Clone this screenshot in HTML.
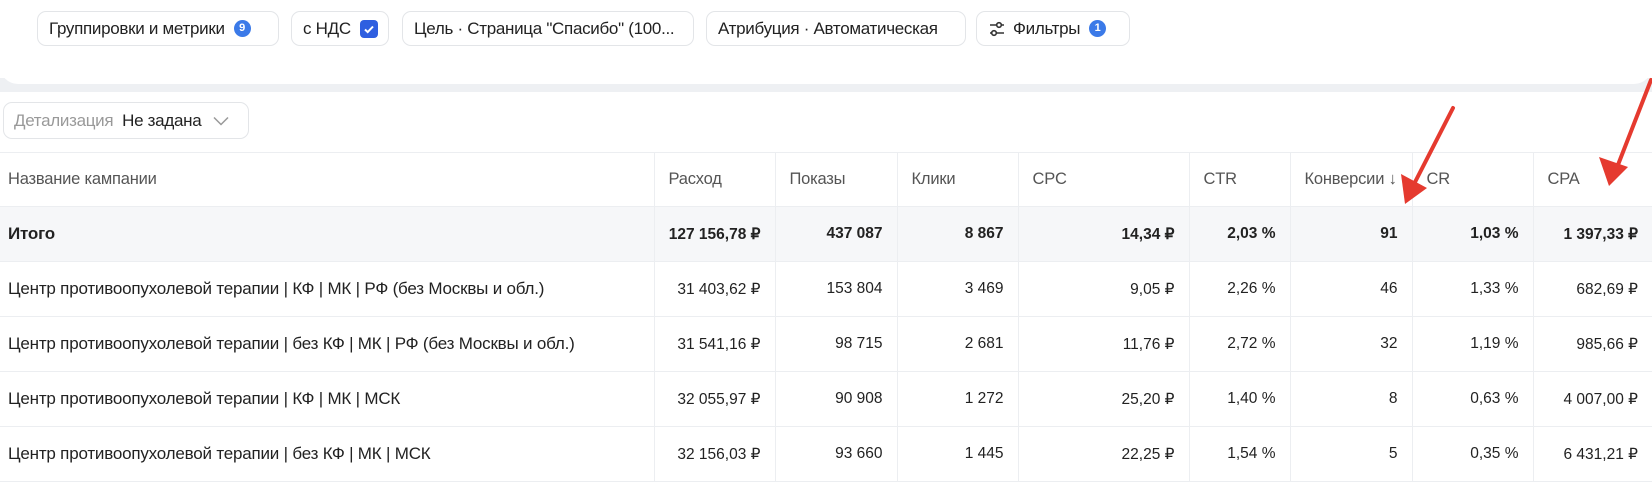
<!DOCTYPE html>
<html><head><meta charset="utf-8"><style>
*{box-sizing:border-box;margin:0;padding:0}
body{width:1652px;height:476px;overflow:hidden;background:#fff;font-family:"Liberation Sans","Noto Sans CJK SC",sans-serif;color:#222;position:relative;font-size:15.5px}
.top{position:absolute;left:0;top:0;width:1652px;height:84px;background:#fff;border-radius:0 0 18px 18px}
.band{position:absolute;left:0;top:78px;width:1652px;height:14px;background:#eef0f3}
.chip{position:absolute;top:11px;height:35px;border:1px solid #e3e5e8;border-radius:9px;display:flex;align-items:center;padding:0 11px;font-size:17px;letter-spacing:-0.3px;color:#222;white-space:nowrap;background:#fff;overflow:hidden}
.badge{display:inline-block;width:17px;height:17px;border-radius:50%;background:#3b7ae8;color:#fff;font-size:11px;font-weight:bold;text-align:center;line-height:17px;margin-left:9px;letter-spacing:0}
.cb{display:inline-block;width:18px;height:18px;border-radius:4px;background:#2f5fe0;margin-left:9px;position:relative}
.dd{position:absolute;left:3px;top:102px;width:246px;height:37px;border:1px solid #e3e5e8;border-radius:9px;display:flex;align-items:center;padding-left:10px;font-size:17px;letter-spacing:-0.3px}
table{position:absolute;left:0;top:152px;border-collapse:collapse;table-layout:fixed;width:1652px}
td{height:55px;border:1px solid #eceef1;padding:0 14px;text-align:right;white-space:nowrap;font-size:15.5px}
td:first-child{text-align:left;padding-left:8px;border-left:none;font-size:17px;letter-spacing:-0.2px}
td:last-child{border-right:none}
tr.h td{height:54px;text-align:left;color:#555;border-top:1px solid #eceef1;font-size:16.5px;letter-spacing:-0.2px}
tr.t td{background:#f6f7f9;font-weight:bold}
</style></head><body>
<div class="band"></div>
<div class="top"></div>
<div class="chip" style="left:37px;width:242px">Группировки и метрики<span class="badge">9</span></div>
<div class="chip" style="left:291px;width:98px">с НДС<span class="cb"><svg width="18" height="18" viewBox="0 0 18 18"><path d="M5 9.5l2.7 2.6L13 6.5" stroke="#fff" stroke-width="2" fill="none"/></svg></span></div>
<div class="chip" style="left:402px;width:292px">Цель · Страница "Спасибо" (100...</div>
<div class="chip" style="left:706px;width:260px">Атрибуция · Автоматическая</div>
<div class="chip" style="left:976px;width:154px"><svg width="18" height="18" viewBox="0 0 18 18" style="margin-right:7px"><path d="M2 5h14M2 13h14" stroke="#333" stroke-width="1.6"/><circle cx="11" cy="5" r="2.3" fill="#fff" stroke="#333" stroke-width="1.6"/><circle cx="6" cy="13" r="2.3" fill="#fff" stroke="#333" stroke-width="1.6"/></svg>Фильтры<span class="badge">1</span></div>
<div class="dd"><span style="color:#999">Детализация</span>&nbsp;&nbsp;<span>Не задана</span><svg width="16" height="10" viewBox="0 0 16 10" style="margin-left:12px"><path d="M1 1.5l7 7 7-7" stroke="#999" stroke-width="1.5" fill="none"/></svg></div>
<table>
<colgroup><col style="width:654px"><col style="width:121px"><col style="width:122px"><col style="width:121px"><col style="width:171px"><col style="width:101px"><col style="width:122px"><col style="width:121px"><col style="width:119px"></colgroup>
<tr class="h"><td>Название кампании</td><td>Расход</td><td>Показы</td><td>Клики</td><td>CPC</td><td>CTR</td><td>Конверсии ↓</td><td>CR</td><td>CPA</td></tr>
<tr class="t"><td>Итого</td><td>127 156,78 ₽</td><td>437 087</td><td>8 867</td><td>14,34 ₽</td><td>2,03 %</td><td>91</td><td>1,03 %</td><td>1 397,33 ₽</td></tr>
<tr><td>Центр противоопухолевой терапии | КФ | МК | РФ (без Москвы и обл.)</td><td>31 403,62 ₽</td><td>153 804</td><td>3 469</td><td>9,05 ₽</td><td>2,26 %</td><td>46</td><td>1,33 %</td><td>682,69 ₽</td></tr>
<tr><td>Центр противоопухолевой терапии | без КФ | МК | РФ (без Москвы и обл.)</td><td>31 541,16 ₽</td><td>98 715</td><td>2 681</td><td>11,76 ₽</td><td>2,72 %</td><td>32</td><td>1,19 %</td><td>985,66 ₽</td></tr>
<tr><td>Центр противоопухолевой терапии | КФ | МК | МСК</td><td>32 055,97 ₽</td><td>90 908</td><td>1 272</td><td>25,20 ₽</td><td>1,40 %</td><td>8</td><td>0,63 %</td><td>4 007,00 ₽</td></tr>
<tr><td>Центр противоопухолевой терапии | без КФ | МК | МСК</td><td>32 156,03 ₽</td><td>93 660</td><td>1 445</td><td>22,25 ₽</td><td>1,54 %</td><td>5</td><td>0,35 %</td><td>6 431,21 ₽</td></tr>
</table>
<svg width="1652" height="476" style="position:absolute;left:0;top:0" viewBox="0 0 1652 476">
<g stroke="#e53a2f" stroke-width="4" fill="#e53a2f" stroke-linecap="round">
<line x1="1453" y1="108" x2="1412" y2="188"/><path d="M1405 204l-4-30 26 14z" stroke="none"/>
<line x1="1651" y1="80" x2="1616" y2="170"/><path d="M1609 186l-10-29 29 10z" stroke="none"/>
</g></svg>
</body></html>
